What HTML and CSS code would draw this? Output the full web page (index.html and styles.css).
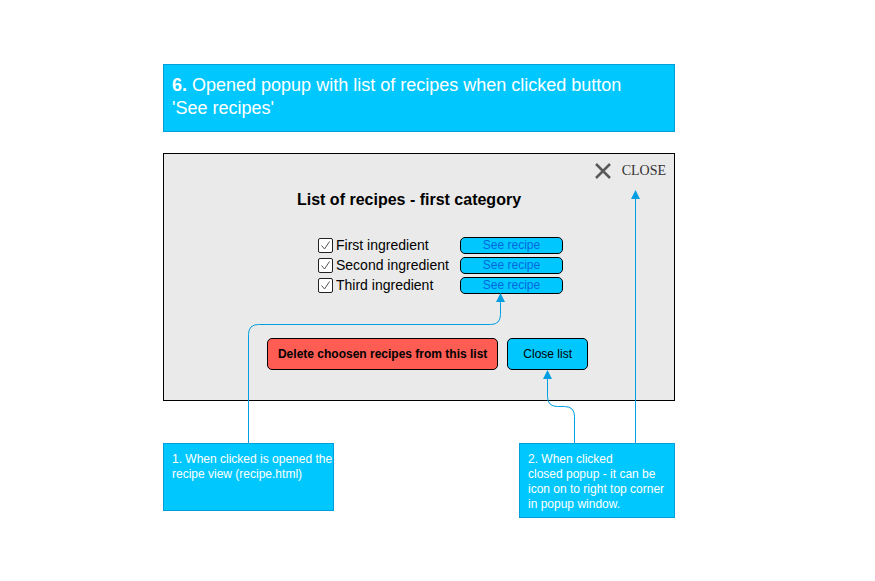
FILE: index.html
```html
<!DOCTYPE html>
<html lang="en">
<head>
<meta charset="utf-8">
<meta name="viewport" content="width=device-width, initial-scale=1">
<title>List of recipes popup</title>
<link rel="stylesheet" href="styles.css">
</head>
<body>
<main class="board">
  <p class="note note-title"><strong>6.</strong> Opened popup with list of recipes when clicked button<br>'See recipes'</p>

  <section class="popup" aria-labelledby="popup-title">
    <button class="close" type="button">
      <svg class="close-icon" width="18" height="18" viewBox="0 0 18 18" aria-hidden="true"><path d="M2 2L16 16M16 2L2 16"/></svg>
      <span>CLOSE</span>
    </button>
    <h1 class="popup-title" id="popup-title">List of recipes - first category</h1>
    <ul class="recipes">
      <li class="recipe">
        <span class="tick"><input type="checkbox" id="first" checked><svg viewBox="0 0 15 15" aria-hidden="true"><path d="M3.500 7.500L6.500 11L11.500 3.500"/></svg></span>
        <label for="first">First ingredient</label>
        <button class="button see" type="button">See recipe</button>
      </li>
      <li class="recipe">
        <span class="tick"><input type="checkbox" id="second" checked><svg viewBox="0 0 15 15" aria-hidden="true"><path d="M3.500 7.500L6.500 11L11.500 3.500"/></svg></span>
        <label for="second">Second ingredient</label>
        <button class="button see" type="button">See recipe</button>
      </li>
      <li class="recipe">
        <span class="tick"><input type="checkbox" id="third" checked><svg viewBox="0 0 15 15" aria-hidden="true"><path d="M3.500 7.500L6.500 11L11.500 3.500"/></svg></span>
        <label for="third">Third ingredient</label>
        <button class="button see" type="button">See recipe</button>
      </li>
    </ul>
    <div class="actions">
      <button class="button action delete" type="button">Delete choosen recipes from this list</button>
      <button class="button action" type="button">Close list</button>
    </div>
  </section>

  <div class="notes">
    <p class="note note-recipe">1. When clicked is opened the recipe view (recipe.html)</p>
    <p class="note note-close">2. When clicked<br>closed popup - it can be icon on to right top corner in popup window.</p>
  </div>

  <svg class="connectors" width="512" height="454" viewBox="0 0 512 454" aria-hidden="true">
    <path class="line" d="M85.500 379V270.500Q85.500 260.500 95.500 260.500H327.500Q337.500 260.500 337.500 250.500V236"/>
    <path class="head" d="M337.500 229L342 238H333Z"/>
    <path class="line" d="M411.500 379V352.500Q411.500 342.500 401.500 342.500H394.500Q384.500 342.500 384.500 332.500V313"/>
    <path class="head" d="M384.500 306L389 315H380Z"/>
    <path class="line" d="M472.500 379V133"/>
    <path class="head" d="M472.500 126L477 135H468Z"/>
  </svg>
</main>
</body>
</html>
```
FILE: styles.css
```css
* {
  box-sizing: border-box;
}

body {
  margin: 0;
  background: #fff;
  color: #000;
  font-family: "Liberation Sans", Arial, sans-serif;
  font-size: 14px;
}

.board {
  position: relative;
  max-width: 512px;
  margin: 64px 0 0 163px;
}

.note {
  margin: 0;
  padding: 8px 8px 5px;
  border: 1px solid #009fdb;
  background: #00c8ff;
  color: #fff;
  font-size: 12px;
  line-height: 15px;
}

.note-title {
  min-height: 68px;
  padding: 9px 8px;
  font-size: 18px;
  line-height: 23px;
}

.popup {
  display: flex;
  flex-direction: column;
  margin-top: 21px;
  padding: 8px 8px 30px;
  border: 1px solid #000;
  background: #eaeaea;
}

.close {
  display: flex;
  align-self: flex-end;
  align-items: center;
  gap: 10px;
  padding: 0;
  border: 0;
  background: none;
  color: #333;
  font: 14px/18px "Liberation Serif", "Times New Roman", serif;
}

.close-icon {
  fill: none;
  stroke: #595959;
  stroke-width: 2.5;
}

.popup-title {
  margin: 10px 0 0;
  padding-right: 20px;
  font-size: 16px;
  line-height: 20px;
  text-align: center;
}

.recipes {
  display: flex;
  flex-direction: column;
  align-self: center;
  margin: 25px 0 0;
  padding: 0 0 0 43px;
  list-style: none;
}

.recipe {
  display: grid;
  grid-template-columns: 15px 121px 103px;
  column-gap: 3px;
  align-items: center;
  height: 20px;
}

.tick {
  position: relative;
  height: 15px;
}

.tick input {
  display: block;
  width: 15px;
  height: 15px;
  margin: 0;
  border: 1px solid #222;
  border-radius: 2px;
  background: #fff;
  appearance: none;
}

.tick svg {
  position: absolute;
  inset: 0;
  fill: none;
  stroke: #555;
  stroke-width: 1;
  pointer-events: none;
}

.tick input:not(:checked) + svg {
  display: none;
}

.button {
  border: 1px solid #000;
  border-radius: 5px;
  background: #00c8ff;
  color: #000;
  font: 12px/15px "Liberation Sans", Arial, sans-serif;
}

.see {
  height: 17px;
  padding: 0;
  color: #0068e0;
}

.actions {
  display: flex;
  justify-content: center;
  gap: 9px;
  margin-top: 43px;
  padding-left: 17px;
}

.action {
  height: 32px;
  padding: 0 15px;
}

.delete {
  padding: 0 10px;
  background: #ff5c54;
  font-weight: bold;
}

.notes {
  display: flex;
  justify-content: space-between;
  align-items: flex-start;
  margin-top: 42px;
}

.note-recipe {
  width: 171px;
  min-height: 68px;
  padding-right: 0;
}

.note-close {
  width: 156px;
}

.connectors {
  position: absolute;
  top: 0;
  left: 0;
  pointer-events: none;
}

.line {
  fill: none;
  stroke: #009fe3;
  stroke-width: 1;
}

.head {
  fill: #009fe3;
}
```
